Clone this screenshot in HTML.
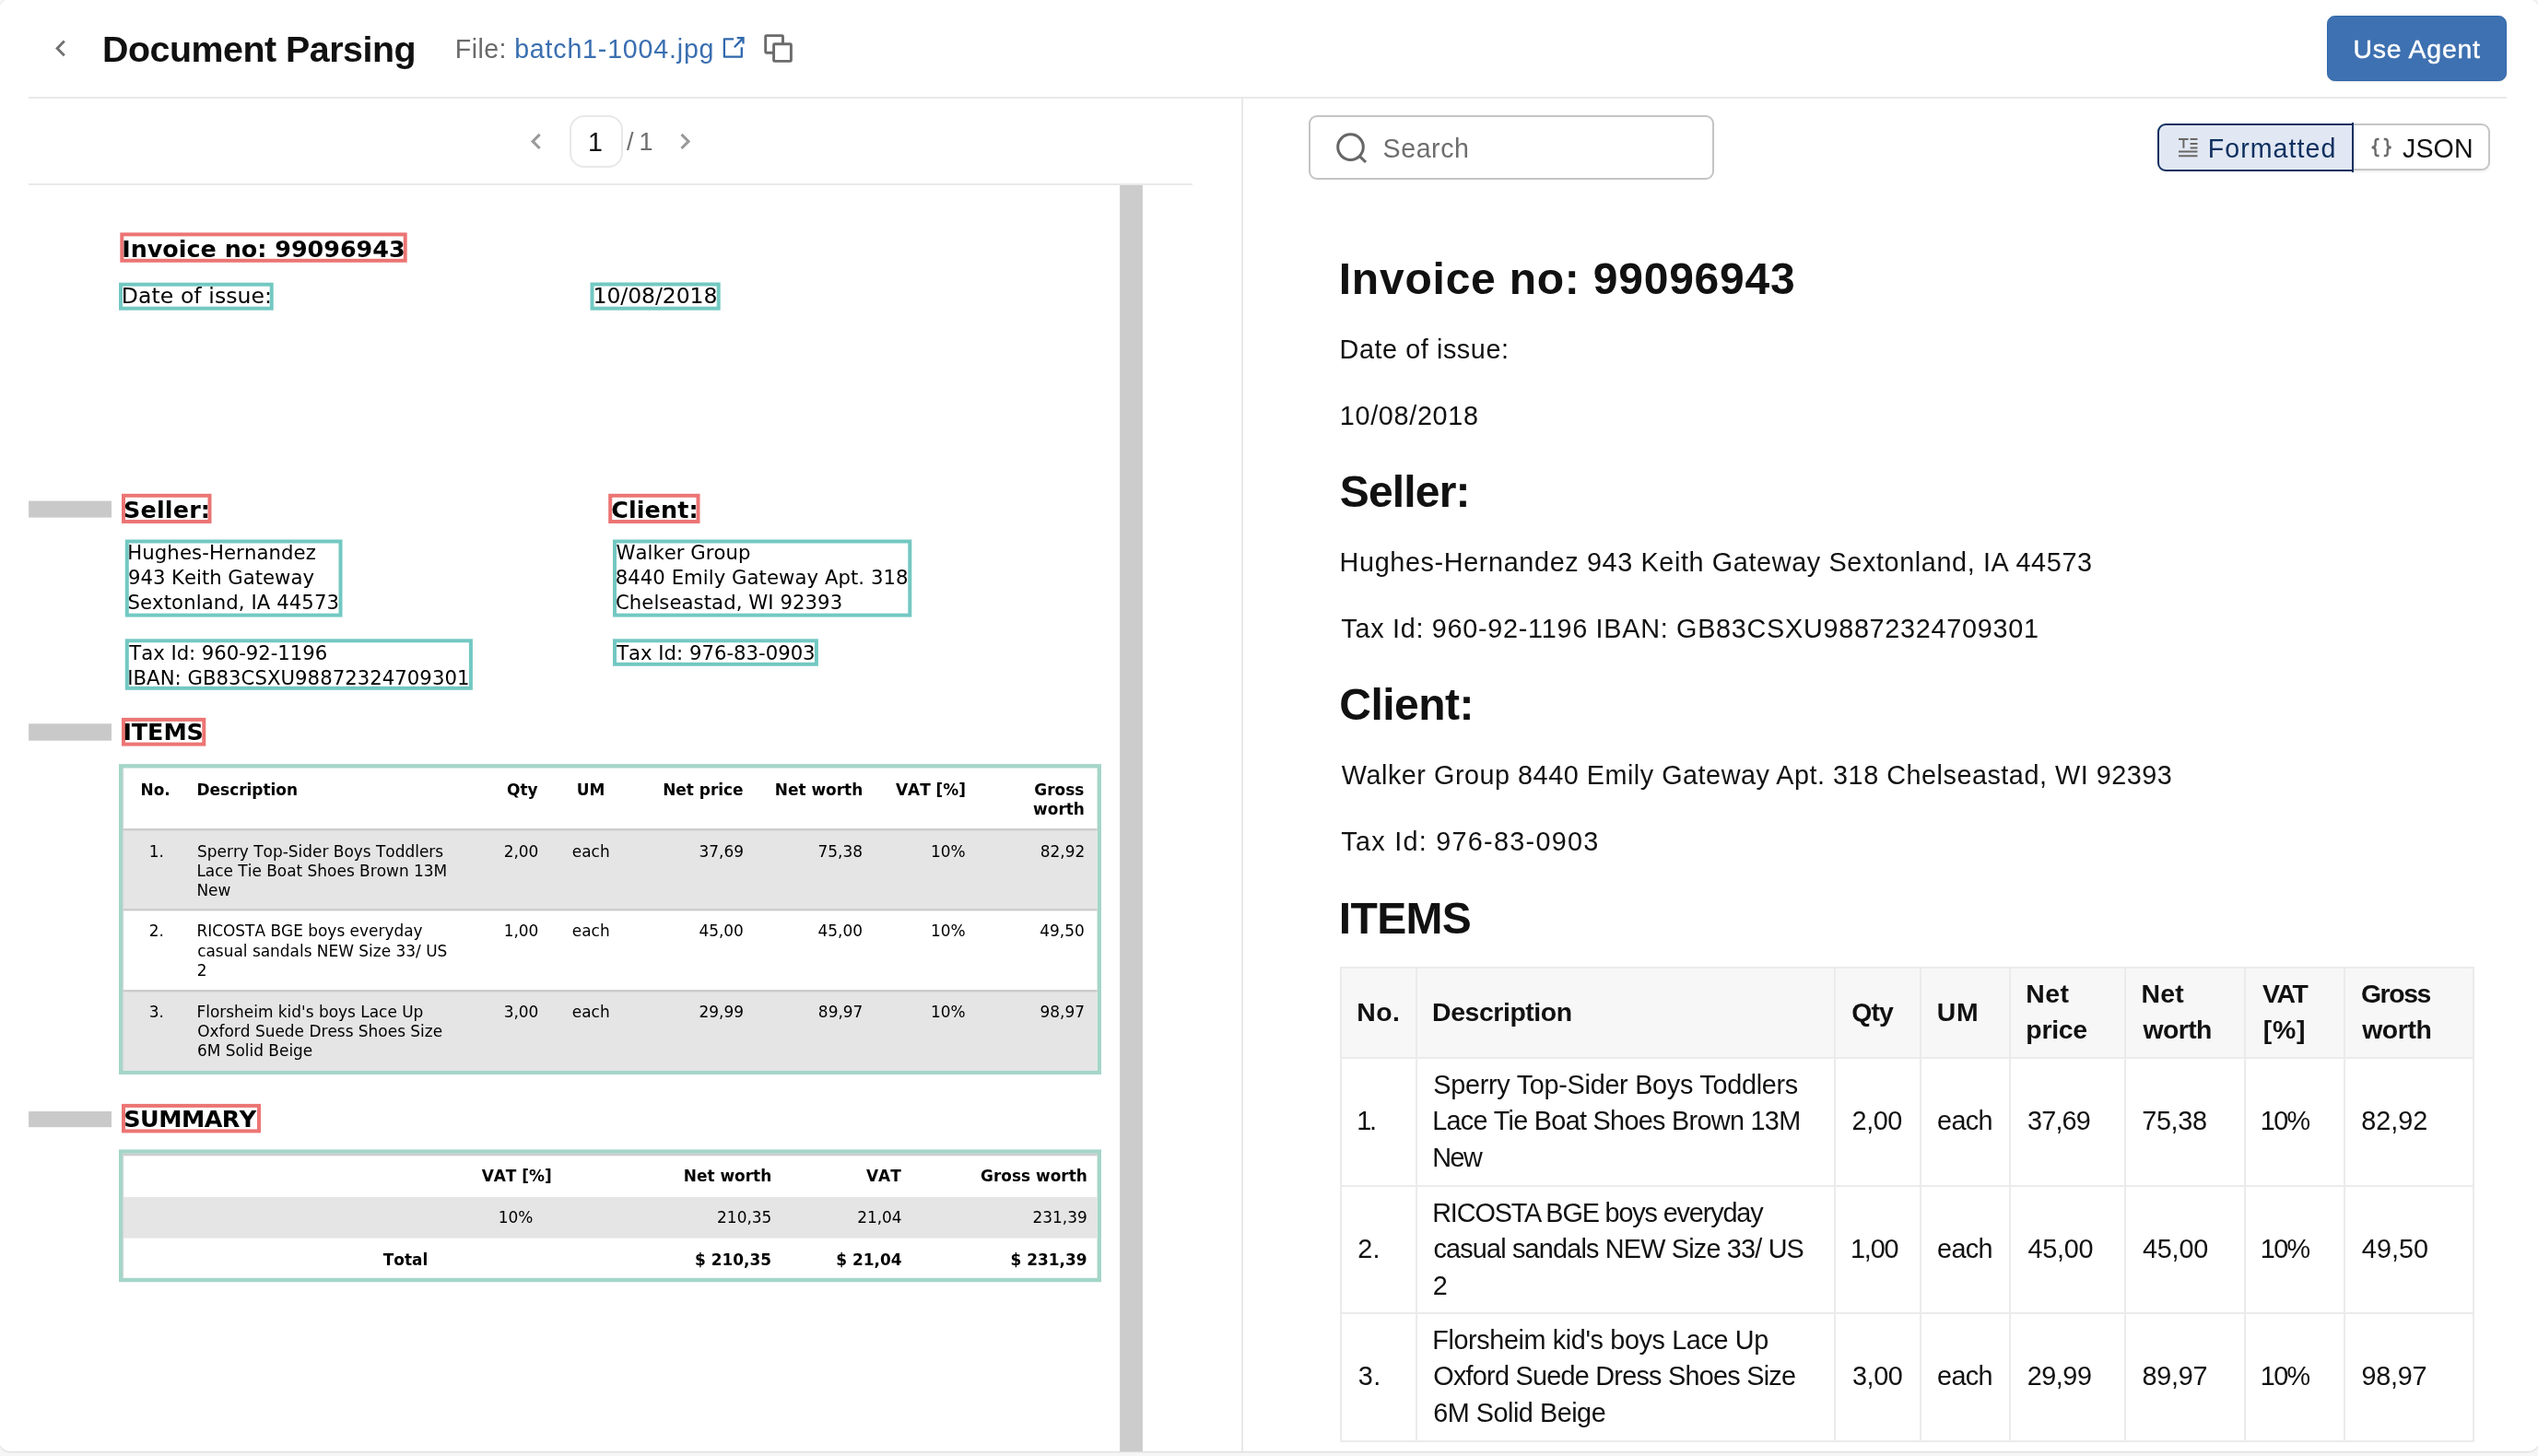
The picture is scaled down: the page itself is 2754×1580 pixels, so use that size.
<!DOCTYPE html>
<html lang="en"><head><meta charset="utf-8"><title>Document Parsing</title>
<style>
html,body{margin:0;padding:0}
body{width:2754px;height:1580px;overflow:hidden;background:#f6f6f6;position:relative;font-family:"Liberation Sans",sans-serif}
.panel{position:absolute;left:-1px;top:-1px;width:2756px;height:1576px;background:#fff;border-radius:12px;box-shadow:0 1px 2px rgba(0,0,0,.09),0 0 0 1px rgba(0,0,0,.035)}
.t{position:absolute;white-space:pre;margin:0;color:#111}
.LR{font-family:"Liberation Sans",sans-serif;font-weight:400}
.LB{font-family:"Liberation Sans",sans-serif;font-weight:700}
.DR{font-family:"DejaVu Sans",sans-serif;font-weight:400;font-stretch:normal;font-kerning:none}
.DB{font-family:"DejaVu Sans",sans-serif;font-weight:700;font-stretch:normal;font-kerning:none}
.b{position:absolute;box-sizing:border-box}
svg{position:absolute;overflow:visible}
#w{position:absolute;left:0;top:0;width:2754px;height:1580px;will-change:transform}
</style></head><body>
<div class="panel"></div>
<div id="w">

<svg style="left:56px;top:40px" width="20" height="26" viewBox="56 40 20 26"><path d="M69.8 44.6 L62.1 52.4 L69.8 60.2" fill="none" stroke="#717171" stroke-width="2.9"/></svg>
<div class="t LB" style="left:111.04px;top:30.80px;font-size:39.4px;line-height:44px;letter-spacing:-0.497px;">Document Parsing</div>
<div class="t LR" style="left:493.84px;top:36.70px;font-size:28.6px;line-height:32px;color:#6b6b6b;letter-spacing:0.403px;">File:</div>
<div class="t LR" style="left:558.14px;top:36.70px;font-size:28.6px;line-height:32px;color:#3a6fb0;letter-spacing:0.806px;">batch1-1004.jpg</div>
<svg style="left:780px;top:36px" width="32" height="32" viewBox="780 36 32 32"><g fill="none" stroke="#2f68ad" stroke-width="2.3"><path d="M796.1 42.3 H785.9 V61.7 H804.8 V51.2" stroke-linejoin="round"/><path d="M796.9 51.2 L806.3 41.4 M799.7 41.1 H806.5 V47.6"/></g></svg>
<svg style="left:826px;top:34px" width="38" height="38" viewBox="826 34 38 38"><rect x="830.7" y="38.6" width="18.8" height="18.7" rx="1" fill="#fff" stroke="#6b6b6b" stroke-width="2.9"/><rect x="839.6" y="47.7" width="18.8" height="18.7" rx="1" fill="#fff" stroke="#6b6b6b" stroke-width="2.9"/></svg>
<div class="b" style="left:2525.00px;top:17.00px;width:195.00px;height:71.00px;background:#3e71b1;border:1.5px solid #2f67ab;border-radius:8.5px;box-shadow:0 1px 2px rgba(0,0,0,.10)"></div>
<div class="t LR" style="left:2553.40px;top:37.10px;font-size:28.4px;line-height:32px;color:#fff;letter-spacing:0.826px;-webkit-text-stroke:0.45px #fff;">Use Agent</div>
<div class="b" style="left:31.00px;top:105.00px;width:2689.00px;height:2.00px;background:#e9e9e9"></div>
<svg style="left:570px;top:140px" width="24" height="28" viewBox="570 140 24 28"><path d="M585.7 145.85 L578.1 153.4 L585.7 160.95" fill="none" stroke="#999" stroke-width="3"/></svg>
<svg style="left:732px;top:140px" width="24" height="28" viewBox="732 140 24 28"><path d="M739.5 145.85 L747.1 153.4 L739.5 160.95" fill="none" stroke="#999" stroke-width="3"/></svg>
<div class="b" style="left:618.00px;top:125.00px;width:58.00px;height:57.00px;border:2px solid #e8e8e8;border-radius:16px;background:#fff"></div>
<div class="t LR" style="left:638.06px;top:137.60px;font-size:28.6px;line-height:32px;">1</div>
<div class="t LR" style="left:680.00px;top:138.90px;font-size:27px;line-height:30px;color:#6e6e6e;">/</div>
<div class="t LR" style="left:693.38px;top:138.90px;font-size:27px;line-height:30px;color:#6e6e6e;">1</div>
<div class="b" style="left:31.00px;top:199.00px;width:1263.00px;height:2.00px;background:#e9e9e9"></div>
<div class="b" style="left:1347.00px;top:107.00px;width:2.00px;height:1468.00px;background:#e9e9e9"></div>
<svg style="left:0;top:0" width="1349" height="1580" viewBox="0 0 1349 1580" shape-rendering="geometricPrecision"><rect x="1215.10" y="201.00" width="24.80" height="1374.00" fill="#cccccc"/><rect x="132.30" y="254.40" width="307.40" height="28.40" fill="none" stroke="#ec7574" stroke-width="4.0"/><rect x="131.00" y="308.70" width="163.70" height="26.00" fill="none" stroke="#73c8c2" stroke-width="4.0"/><rect x="642.50" y="308.50" width="137.20" height="26.20" fill="none" stroke="#73c8c2" stroke-width="4.0"/><rect x="31.10" y="543.60" width="89.90" height="18.00" fill="#c9c9c9"/><rect x="134.00" y="537.80" width="93.50" height="28.20" fill="none" stroke="#ec7574" stroke-width="4.0"/><rect x="662.20" y="537.80" width="95.30" height="28.20" fill="none" stroke="#ec7574" stroke-width="4.0"/><rect x="137.80" y="587.50" width="231.70" height="80.10" fill="none" stroke="#73c8c2" stroke-width="4.0"/><rect x="137.80" y="695.30" width="373.10" height="51.50" fill="none" stroke="#73c8c2" stroke-width="4.0"/><rect x="667.00" y="587.50" width="320.30" height="80.10" fill="none" stroke="#73c8c2" stroke-width="4.0"/><rect x="667.00" y="695.30" width="218.90" height="25.50" fill="none" stroke="#73c8c2" stroke-width="4.0"/><rect x="31.10" y="785.30" width="89.90" height="18.40" fill="#c9c9c9"/><rect x="134.00" y="780.90" width="87.30" height="26.70" fill="none" stroke="#ec7574" stroke-width="4.0"/><rect x="131.20" y="831.30" width="1061.60" height="332.50" fill="#fff" stroke="#a5d5c9" stroke-width="4.4"/><rect x="133.40" y="899.10" width="1057.20" height="88.50" fill="#e5e5e5"/><rect x="133.40" y="899.10" width="1057.20" height="2.20" fill="#cacaca"/><rect x="133.40" y="986.20" width="1057.20" height="2.20" fill="#cacaca"/><rect x="133.40" y="1074.20" width="1057.20" height="87.40" fill="#e5e5e5"/><rect x="133.40" y="1074.20" width="1057.20" height="2.20" fill="#cacaca"/><rect x="133.40" y="833.50" width="0.80" height="328.10" fill="#cfcfcf"/><rect x="31.10" y="1206.00" width="89.90" height="17.20" fill="#c9c9c9"/><rect x="134.00" y="1199.90" width="147.00" height="27.50" fill="none" stroke="#ec7574" stroke-width="4.0"/><rect x="131.20" y="1249.60" width="1061.60" height="139.40" fill="#fff" stroke="#a5d5c9" stroke-width="4.4"/><rect x="133.40" y="1251.80" width="1057.20" height="2.50" fill="#cdcdcd"/><rect x="133.40" y="1298.90" width="1057.20" height="44.70" fill="#e5e5e5"/><rect x="133.40" y="1251.80" width="0.80" height="135.00" fill="#cfcfcf"/></svg>
<div class="t DB" style="left:132.25px;top:255.20px;font-size:25.43px;line-height:30px;color:#000;letter-spacing:-0.008px;">Invoice no: 99096943</div>
<div class="t DR" style="left:131.80px;top:307.00px;font-size:23.55px;line-height:28px;color:#000;letter-spacing:0.067px;">Date of issue:</div>
<div class="t DR" style="left:643.61px;top:307.00px;font-size:23.55px;line-height:28px;color:#000;letter-spacing:-0.101px;">10/08/2018</div>
<div class="t DB" style="left:133.96px;top:538.10px;font-size:25.43px;line-height:30px;color:#000;letter-spacing:0.194px;">Seller:</div>
<div class="t DB" style="left:663.13px;top:538.10px;font-size:25.43px;line-height:30px;color:#000;letter-spacing:0.130px;">Client:</div>
<div class="t DR" style="left:138.23px;top:586.80px;font-size:21.2px;line-height:25px;color:#000;letter-spacing:0.105px;">Hughes-Hernandez</div>
<div class="t DR" style="left:138.98px;top:614.10px;font-size:21.2px;line-height:25px;color:#000;letter-spacing:-0.007px;">943 Keith Gateway</div>
<div class="t DR" style="left:138.42px;top:641.40px;font-size:21.2px;line-height:25px;color:#000;letter-spacing:0.093px;">Sextonland, IA 44573</div>
<div class="t DR" style="left:140.35px;top:695.70px;font-size:21.2px;line-height:25px;color:#000;letter-spacing:-0.033px;">Tax Id: 960-92-1196</div>
<div class="t DR" style="left:138.23px;top:722.70px;font-size:21.2px;line-height:25px;color:#000;letter-spacing:0.048px;">IBAN: GB83CSXU98872324709301</div>
<div class="t DR" style="left:668.41px;top:586.80px;font-size:21.2px;line-height:25px;color:#000;letter-spacing:0.055px;">Walker Group</div>
<div class="t DR" style="left:667.67px;top:614.10px;font-size:21.2px;line-height:25px;color:#000;letter-spacing:0.064px;">8440 Emily Gateway Apt. 318</div>
<div class="t DR" style="left:667.93px;top:641.40px;font-size:21.2px;line-height:25px;color:#000;letter-spacing:0.070px;">Chelseastad, WI 92393</div>
<div class="t DR" style="left:669.15px;top:695.70px;font-size:21.2px;line-height:25px;color:#000;letter-spacing:0.004px;">Tax Id: 976-83-0903</div>
<div class="t DB" style="left:133.45px;top:779.30px;font-size:25.43px;line-height:30px;color:#000;letter-spacing:-0.070px;">ITEMS</div>
<div class="t DB" style="left:152.53px;top:846.70px;font-size:16.95px;line-height:20px;color:#000;">No.</div>
<div class="t DB" style="left:213.53px;top:846.70px;font-size:16.95px;line-height:20px;color:#000;">Description</div>
<div class="t DB" style="left:550.08px;top:846.70px;font-size:16.95px;line-height:20px;color:#000;">Qty</div>
<div class="t DB" style="left:625.70px;top:846.70px;font-size:16.95px;line-height:20px;color:#000;">UM</div>
<div class="t DB" style="left:719.15px;top:846.70px;font-size:16.95px;line-height:20px;color:#000;">Net price</div>
<div class="t DB" style="left:840.75px;top:846.70px;font-size:16.95px;line-height:20px;color:#000;">Net worth</div>
<div class="t DB" style="left:971.95px;top:846.70px;font-size:16.95px;line-height:20px;color:#000;">VAT [%]</div>
<div class="t DB" style="left:1122.35px;top:846.70px;font-size:16.95px;line-height:20px;color:#000;">Gross</div>
<div class="t DB" style="left:1121.11px;top:867.60px;font-size:16.95px;line-height:20px;color:#000;">worth</div>
<div class="t DR" style="left:161.76px;top:913.60px;font-size:16.95px;line-height:20px;color:#000;">1.</div>
<div class="t DR" style="left:214.00px;top:913.60px;font-size:16.95px;line-height:20px;color:#000;">Sperry Top-Sider Boys Toddlers</div>
<div class="t DR" style="left:213.45px;top:934.85px;font-size:16.95px;line-height:20px;color:#000;">Lace Tie Boat Shoes Brown 13M</div>
<div class="t DR" style="left:213.45px;top:956.10px;font-size:16.95px;line-height:20px;color:#000;">New</div>
<div class="t DR" style="left:546.70px;top:913.60px;font-size:16.95px;line-height:20px;color:#000;">2,00</div>
<div class="t DR" style="left:620.81px;top:913.60px;font-size:16.95px;line-height:20px;color:#000;">each</div>
<div class="t DR" style="left:758.51px;top:913.60px;font-size:16.95px;line-height:20px;color:#000;">37,69</div>
<div class="t DR" style="left:887.57px;top:913.60px;font-size:16.95px;line-height:20px;color:#000;">75,38</div>
<div class="t DR" style="left:1009.88px;top:913.60px;font-size:16.95px;line-height:20px;color:#000;">10%</div>
<div class="t DR" style="left:1128.82px;top:913.60px;font-size:16.95px;line-height:20px;color:#000;">82,92</div>
<div class="t DR" style="left:161.76px;top:1000.40px;font-size:16.95px;line-height:20px;color:#000;">2.</div>
<div class="t DR" style="left:213.45px;top:1000.40px;font-size:16.95px;line-height:20px;color:#000;">RICOSTA BGE boys everyday</div>
<div class="t DR" style="left:214.17px;top:1021.65px;font-size:16.95px;line-height:20px;color:#000;">casual sandals NEW Size 33/ US</div>
<div class="t DR" style="left:213.87px;top:1042.90px;font-size:16.95px;line-height:20px;color:#000;">2</div>
<div class="t DR" style="left:546.70px;top:1000.40px;font-size:16.95px;line-height:20px;color:#000;">1,00</div>
<div class="t DR" style="left:620.81px;top:1000.40px;font-size:16.95px;line-height:20px;color:#000;">each</div>
<div class="t DR" style="left:758.42px;top:1000.40px;font-size:16.95px;line-height:20px;color:#000;">45,00</div>
<div class="t DR" style="left:887.52px;top:1000.40px;font-size:16.95px;line-height:20px;color:#000;">45,00</div>
<div class="t DR" style="left:1009.88px;top:1000.40px;font-size:16.95px;line-height:20px;color:#000;">10%</div>
<div class="t DR" style="left:1128.22px;top:1000.40px;font-size:16.95px;line-height:20px;color:#000;">49,50</div>
<div class="t DR" style="left:161.76px;top:1087.60px;font-size:16.95px;line-height:20px;color:#000;">3.</div>
<div class="t DR" style="left:213.45px;top:1087.60px;font-size:16.95px;line-height:20px;color:#000;">Florsheim kid's boys Lace Up</div>
<div class="t DR" style="left:214.17px;top:1108.85px;font-size:16.95px;line-height:20px;color:#000;">Oxford Suede Dress Shoes Size</div>
<div class="t DR" style="left:213.91px;top:1130.10px;font-size:16.95px;line-height:20px;color:#000;">6M Solid Beige</div>
<div class="t DR" style="left:546.70px;top:1087.60px;font-size:16.95px;line-height:20px;color:#000;">3,00</div>
<div class="t DR" style="left:620.81px;top:1087.60px;font-size:16.95px;line-height:20px;color:#000;">each</div>
<div class="t DR" style="left:758.51px;top:1087.60px;font-size:16.95px;line-height:20px;color:#000;">29,99</div>
<div class="t DR" style="left:887.86px;top:1087.60px;font-size:16.95px;line-height:20px;color:#000;">89,97</div>
<div class="t DR" style="left:1009.88px;top:1087.60px;font-size:16.95px;line-height:20px;color:#000;">10%</div>
<div class="t DR" style="left:1128.56px;top:1087.60px;font-size:16.95px;line-height:20px;color:#000;">98,97</div>
<div class="t DB" style="left:134.36px;top:1198.90px;font-size:25.43px;line-height:30px;color:#000;letter-spacing:-0.565px;">SUMMARY</div>
<div class="t DB" style="left:522.63px;top:1266.10px;font-size:16.95px;line-height:20px;color:#000;">VAT [%]</div>
<div class="t DB" style="left:741.75px;top:1266.10px;font-size:16.95px;line-height:20px;color:#000;">Net worth</div>
<div class="t DB" style="left:940.00px;top:1266.10px;font-size:16.95px;line-height:20px;color:#000;">VAT</div>
<div class="t DB" style="left:1064.05px;top:1266.10px;font-size:16.95px;line-height:20px;color:#000;">Gross worth</div>
<div class="t DR" style="left:540.71px;top:1311.00px;font-size:16.95px;line-height:20px;color:#000;">10%</div>
<div class="t DR" style="left:778.10px;top:1311.00px;font-size:16.95px;line-height:20px;color:#000;">210,35</div>
<div class="t DR" style="left:930.15px;top:1311.00px;font-size:16.95px;line-height:20px;color:#000;">21,04</div>
<div class="t DR" style="left:1120.44px;top:1311.00px;font-size:16.95px;line-height:20px;color:#000;">231,39</div>
<div class="t DB" style="left:415.79px;top:1357.10px;font-size:16.95px;line-height:20px;color:#000;">Total</div>
<div class="t DB" style="left:754.05px;top:1357.10px;font-size:16.95px;line-height:20px;color:#000;">$ 210,35</div>
<div class="t DB" style="left:907.21px;top:1357.10px;font-size:16.95px;line-height:20px;color:#000;">$ 21,04</div>
<div class="t DB" style="left:1096.53px;top:1357.10px;font-size:16.95px;line-height:20px;color:#000;">$ 231,39</div>
<div class="b" style="left:1420.30px;top:125.20px;width:439.70px;height:69.40px;border:2px solid #c4c4c4;border-radius:9px;background:#fff"></div>
<svg style="left:1446px;top:140px" width="42" height="42" viewBox="1446 140 42 42"><circle cx="1465.5" cy="159.6" r="13.8" fill="none" stroke="#666" stroke-width="3"/><path d="M1475.2 169.4 L1482 176" fill="none" stroke="#666" stroke-width="3"/></svg>
<div class="t LR" style="left:1500.61px;top:144.50px;font-size:28.6px;line-height:32px;color:#6e6e6e;letter-spacing:0.534px;">Search</div>
<div class="b" style="left:2552.00px;top:134.00px;width:149.60px;height:51.20px;border:2px solid #c6c6c6;border-left:none;border-radius:0 9px 9px 0;background:#fff;box-shadow:0 2px 2px rgba(0,0,0,.06)"></div>
<div class="b" style="left:2341.20px;top:133.70px;width:212.50px;height:52.30px;border:2px solid #0f3060;border-radius:9px 0 0 9px;background:#e1e8f3"></div>
<div class="b" style="left:2551.70px;top:133.00px;width:2.00px;height:54.00px;background:#0f3060"></div>
<svg style="left:2360px;top:146px" width="30" height="30" viewBox="2360 146 30 30"><path d="M2364 151.1 H2374.6 M2369.4 151.1 V160.8 M2376.6 151.1 H2384.5 M2376.6 156.1 H2384.5 M2376.6 160.6 H2384.5 M2364 164.6 H2384.5 M2364 169.3 H2384.5" fill="none" stroke="#6b6764" stroke-width="2"/></svg>
<div class="t LR" style="left:2395.64px;top:144.80px;font-size:28.6px;line-height:32px;color:#0f3060;letter-spacing:1.071px;">Formatted</div>
<svg style="left:2568px;top:146px" width="34" height="30" viewBox="2568 146 34 30"><path d="M2581.5 151 H2580.2 Q2577.6 151 2577.6 153.6 V157 Q2577.6 160 2573.6 160 Q2577.6 160 2577.6 163 V166.4 Q2577.6 169 2580.2 169 H2581.5 M2586.8 151 H2588.1 Q2590.7 151 2590.7 153.6 V157 Q2590.7 160 2594.7 160 Q2590.7 160 2590.7 163 V166.4 Q2590.7 169 2588.1 169 H2586.8" fill="none" stroke="#6b6b6b" stroke-width="2.4"/></svg>
<div class="t LR" style="left:2607.07px;top:144.80px;font-size:28.6px;line-height:32px;letter-spacing:0.071px;">JSON</div>
<div class="t LB" style="left:1452.76px;top:275.60px;font-size:48px;line-height:53px;letter-spacing:0.774px;">Invoice no: 99096943</div>
<div class="t LR" style="left:1453.62px;top:362.70px;font-size:28.8px;line-height:32px;letter-spacing:0.562px;">Date of issue:</div>
<div class="t LR" style="left:1453.84px;top:434.60px;font-size:28.8px;line-height:32px;letter-spacing:0.664px;">10/08/2018</div>
<div class="t LB" style="left:1453.76px;top:507.10px;font-size:48px;line-height:53px;letter-spacing:-0.821px;">Seller:</div>
<div class="t LR" style="left:1453.62px;top:594.00px;font-size:28.8px;line-height:32px;letter-spacing:0.622px;">Hughes-Hernandez 943 Keith Gateway Sextonland, IA 44573</div>
<div class="t LR" style="left:1455.35px;top:666.00px;font-size:28.8px;line-height:32px;letter-spacing:0.712px;">Tax Id: 960-92-1196 IBAN: GB83CSXU98872324709301</div>
<div class="t LB" style="left:1453.28px;top:738.30px;font-size:48px;line-height:53px;letter-spacing:-0.504px;">Client:</div>
<div class="t LR" style="left:1455.86px;top:825.20px;font-size:28.8px;line-height:32px;letter-spacing:0.512px;">Walker Group 8440 Emily Gateway Apt. 318 Chelseastad, WI 92393</div>
<div class="t LR" style="left:1455.35px;top:897.10px;font-size:28.8px;line-height:32px;letter-spacing:1.264px;">Tax Id: 976-83-0903</div>
<div class="t LB" style="left:1452.76px;top:969.60px;font-size:48px;line-height:53px;letter-spacing:-0.634px;">ITEMS</div>
<div class="b" style="left:1454.00px;top:1049.00px;width:1231.00px;height:98.00px;background:#f7f7f7"></div>
<div class="b" style="left:1454.00px;top:1049.00px;width:2.00px;height:516.00px;background:#ebebeb"></div>
<div class="b" style="left:1536.00px;top:1049.00px;width:2.00px;height:516.00px;background:#ebebeb"></div>
<div class="b" style="left:1990.00px;top:1049.00px;width:2.00px;height:516.00px;background:#ebebeb"></div>
<div class="b" style="left:2083.00px;top:1049.00px;width:2.00px;height:516.00px;background:#ebebeb"></div>
<div class="b" style="left:2180.00px;top:1049.00px;width:2.00px;height:516.00px;background:#ebebeb"></div>
<div class="b" style="left:2305.00px;top:1049.00px;width:2.00px;height:516.00px;background:#ebebeb"></div>
<div class="b" style="left:2435.00px;top:1049.00px;width:2.00px;height:516.00px;background:#ebebeb"></div>
<div class="b" style="left:2543.00px;top:1049.00px;width:2.00px;height:516.00px;background:#ebebeb"></div>
<div class="b" style="left:2683.00px;top:1049.00px;width:2.00px;height:516.00px;background:#ebebeb"></div>
<div class="b" style="left:1454.00px;top:1049.00px;width:1231.00px;height:2.00px;background:#ebebeb"></div>
<div class="b" style="left:1454.00px;top:1147.00px;width:1231.00px;height:2.00px;background:#ebebeb"></div>
<div class="b" style="left:1454.00px;top:1286.00px;width:1231.00px;height:2.00px;background:#ebebeb"></div>
<div class="b" style="left:1454.00px;top:1424.00px;width:1231.00px;height:2.00px;background:#ebebeb"></div>
<div class="b" style="left:1454.00px;top:1563.00px;width:1231.00px;height:2.00px;background:#ebebeb"></div>
<div class="t LB" style="left:1472.18px;top:1081.80px;font-size:28.4px;line-height:32px;letter-spacing:0.455px;">No.</div>
<div class="t LB" style="left:1554.08px;top:1081.80px;font-size:28.4px;line-height:32px;letter-spacing:-0.414px;">Description</div>
<div class="t LB" style="left:2009.36px;top:1081.80px;font-size:28.4px;line-height:32px;letter-spacing:-0.908px;">Qty</div>
<div class="t LB" style="left:2101.80px;top:1081.80px;font-size:28.4px;line-height:32px;letter-spacing:0.679px;">UM</div>
<div class="t LB" style="left:2198.28px;top:1061.80px;font-size:28.4px;line-height:32px;letter-spacing:0.518px;">Net</div>
<div class="t LB" style="left:2198.35px;top:1101.40px;font-size:28.4px;line-height:32px;letter-spacing:-0.264px;">price</div>
<div class="t LB" style="left:2323.58px;top:1061.80px;font-size:28.4px;line-height:32px;letter-spacing:0.218px;">Net</div>
<div class="t LB" style="left:2325.57px;top:1101.40px;font-size:28.4px;line-height:32px;letter-spacing:-0.606px;">worth</div>
<div class="t LB" style="left:2454.89px;top:1061.80px;font-size:28.4px;line-height:32px;letter-spacing:-1.328px;">VAT</div>
<div class="t LB" style="left:2455.74px;top:1101.40px;font-size:28.4px;line-height:32px;letter-spacing:0.841px;">[%]</div>
<div class="t LB" style="left:2561.96px;top:1061.80px;font-size:28.4px;line-height:32px;letter-spacing:-1.414px;">Gross</div>
<div class="t LB" style="left:2563.17px;top:1101.40px;font-size:28.4px;line-height:32px;letter-spacing:-0.381px;">worth</div>
<div class="t LR" style="left:1472.14px;top:1200.20px;font-size:28.8px;line-height:32px;letter-spacing:-2.069px;">1.</div>
<div class="t LR" style="left:1555.30px;top:1160.90px;font-size:28.8px;line-height:32px;letter-spacing:-0.275px;">Sperry Top-Sider Boys Toddlers</div>
<div class="t LR" style="left:1554.22px;top:1200.20px;font-size:28.8px;line-height:32px;letter-spacing:-0.694px;">Lace Tie Boat Shoes Brown 13M</div>
<div class="t LR" style="left:1554.22px;top:1239.50px;font-size:28.8px;line-height:32px;letter-spacing:-1.457px;">New</div>
<div class="t LR" style="left:2009.56px;top:1200.20px;font-size:28.8px;line-height:32px;letter-spacing:-0.403px;">2,00</div>
<div class="t LR" style="left:2102.08px;top:1200.20px;font-size:28.8px;line-height:32px;letter-spacing:-0.674px;">each</div>
<div class="t LR" style="left:2200.12px;top:1200.20px;font-size:28.8px;line-height:32px;letter-spacing:-0.842px;">37,69</div>
<div class="t LR" style="left:2324.19px;top:1200.20px;font-size:28.8px;line-height:32px;letter-spacing:-0.327px;">75,38</div>
<div class="t LR" style="left:2452.84px;top:1200.20px;font-size:28.8px;line-height:32px;letter-spacing:-1.662px;">10%</div>
<div class="t LR" style="left:2562.28px;top:1200.20px;font-size:28.8px;line-height:32px;letter-spacing:0.005px;">82,92</div>
<div class="t LR" style="left:1473.36px;top:1339.20px;font-size:28.8px;line-height:32px;letter-spacing:0.011px;">2.</div>
<div class="t LR" style="left:1554.22px;top:1299.90px;font-size:28.8px;line-height:32px;letter-spacing:-1.142px;">RICOSTA BGE boys everyday</div>
<div class="t LR" style="left:1555.38px;top:1339.20px;font-size:28.8px;line-height:32px;letter-spacing:-0.803px;">casual sandals NEW Size 33/ US</div>
<div class="t LR" style="left:1554.86px;top:1378.50px;font-size:28.8px;line-height:32px;">2</div>
<div class="t LR" style="left:2007.94px;top:1339.20px;font-size:28.8px;line-height:32px;letter-spacing:-1.163px;">1,00</div>
<div class="t LR" style="left:2102.08px;top:1339.20px;font-size:28.8px;line-height:32px;letter-spacing:-0.674px;">each</div>
<div class="t LR" style="left:2200.55px;top:1339.20px;font-size:28.8px;line-height:32px;letter-spacing:-0.304px;">45,00</div>
<div class="t LR" style="left:2325.05px;top:1339.20px;font-size:28.8px;line-height:32px;letter-spacing:-0.229px;">45,00</div>
<div class="t LR" style="left:2452.84px;top:1339.20px;font-size:28.8px;line-height:32px;letter-spacing:-1.662px;">10%</div>
<div class="t LR" style="left:2562.85px;top:1339.20px;font-size:28.8px;line-height:32px;letter-spacing:0.046px;">49,50</div>
<div class="t LR" style="left:1473.72px;top:1477.20px;font-size:28.8px;line-height:32px;letter-spacing:0.451px;">3.</div>
<div class="t LR" style="left:1554.22px;top:1437.90px;font-size:28.8px;line-height:32px;letter-spacing:-0.380px;">Florsheim kid's boys Lace Up</div>
<div class="t LR" style="left:1555.23px;top:1477.20px;font-size:28.8px;line-height:32px;letter-spacing:-0.741px;">Oxford Suede Dress Shoes Size</div>
<div class="t LR" style="left:1555.16px;top:1516.50px;font-size:28.8px;line-height:32px;letter-spacing:-0.477px;">6M Solid Beige</div>
<div class="t LR" style="left:2009.92px;top:1477.20px;font-size:28.8px;line-height:32px;letter-spacing:-0.390px;">3,00</div>
<div class="t LR" style="left:2102.08px;top:1477.20px;font-size:28.8px;line-height:32px;letter-spacing:-0.674px;">each</div>
<div class="t LR" style="left:2199.76px;top:1477.20px;font-size:28.8px;line-height:32px;letter-spacing:-0.477px;">29,99</div>
<div class="t LR" style="left:2324.48px;top:1477.20px;font-size:28.8px;line-height:32px;letter-spacing:-0.270px;">89,97</div>
<div class="t LR" style="left:2452.84px;top:1477.20px;font-size:28.8px;line-height:32px;letter-spacing:-1.662px;">10%</div>
<div class="t LR" style="left:2562.53px;top:1477.20px;font-size:28.8px;line-height:32px;letter-spacing:-0.259px;">98,97</div>
</div></body></html>
